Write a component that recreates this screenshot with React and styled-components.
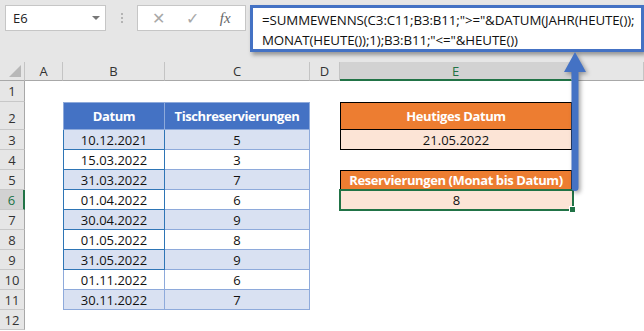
import React from "react";
import styled, { createGlobalStyle, css } from "styled-components";

const GlobalStyle = createGlobalStyle`
  body {
    margin: 0;
    background: #fff;
    font-family: "Open Sans", "Liberation Sans", sans-serif;
  }
`;

const Page = styled.div`
  width: 644px;
  height: 331px;
  overflow: hidden;
  background: #fff;
  position: relative;
`;

const FormulaBar = styled.div`
  height: 62px;
  background: #e6e6e6;
  display: flex;
  align-items: flex-start;
  padding: 5px 0 0 5px;
  box-sizing: border-box;
`;

const NameBox = styled.div`
  width: 101px;
  height: 26px;
  box-sizing: border-box;
  background: #fff;
  border: 1px solid #c6c6c6;
  display: flex;
  align-items: center;
  justify-content: space-between;
  padding: 0 5px 0 7px;
  font-size: 13px;
  color: #222;
`;

const DropArrow = styled.span`
  width: 0;
  height: 0;
  border-left: 4px solid transparent;
  border-right: 4px solid transparent;
  border-top: 4px solid #777;
`;

const Grip = styled.div`
  width: 31px;
  height: 26px;
  display: flex;
  flex-direction: column;
  align-items: center;
  justify-content: center;
  gap: 2px;
  span {
    width: 2px;
    height: 2px;
    background: #b4b4b4;
  }
`;

const FxBox = styled.div`
  width: 109px;
  height: 26px;
  box-sizing: border-box;
  background: #fff;
  border: 1px solid #c6c6c6;
  display: flex;
  align-items: center;
  justify-content: space-around;
  padding: 0 4px;
  color: #a8a8a8;
  font-size: 16px;
`;

const FxLabel = styled.span`
  font-family: "Liberation Serif", serif;
  font-style: italic;
  color: #666;
  font-size: 15px;
`;

const FormulaInput = styled.div`
  margin-left: 4px;
  width: 394px;
  height: 47px;
  box-sizing: border-box;
  background: #fff;
  border: 3px solid #4472c4;
  box-shadow: 2px 3px 4px rgba(0, 0, 0, 0.35);
  padding: 2px 0 0 9px;
  font-family: "Open Sans", "Liberation Sans", sans-serif;
  font-size: 13.3px;
  line-height: 20px;
  color: #111;
  white-space: pre;
  letter-spacing: -0.1px;
`;

const Sheet = styled.div`
  display: grid;
  grid-template-columns: 25px 38px 102px 145px 30px 232px 1fr;
  grid-template-rows: 19px 21px 28px repeat(10, 20px);
  font-size: 13px;
`;

const ColHead = styled.div`
  grid-row: 1;
  grid-column: ${(p) => p.col};
  background: ${(p) => (p.active ? "#d2d2d2" : "#e6e6e6")};
  color: ${(p) => (p.active ? "#217346" : "#333")};
  border-right: 1px solid #c4c4c4;
  border-bottom: ${(p) => (p.active ? "2px solid #217346" : "1px solid #a8a8a8")};
  box-sizing: border-box;
  display: flex;
  align-items: center;
  justify-content: center;
  font-size: 13px;
`;

const Corner = styled.div`
  grid-row: 1;
  grid-column: 1;
  background: #e6e6e6;
  border-right: 1px solid #c4c4c4;
  border-bottom: 1px solid #a8a8a8;
  box-sizing: border-box;
  display: flex;
  align-items: flex-end;
  justify-content: flex-end;
  padding: 0 3px 3px 0;
  &::after {
    content: "";
    width: 0;
    height: 0;
    border-left: 12px solid transparent;
    border-bottom: 12px solid #b8b8b8;
  }
`;

const RowHead = styled.div`
  grid-column: 1;
  grid-row: ${(p) => p.row};
  background: ${(p) => (p.active ? "#d2d2d2" : "#e6e6e6")};
  color: ${(p) => (p.active ? "#217346" : "#333")};
  border-bottom: 1px solid #c8c8c8;
  border-right: ${(p) => (p.active ? "2px solid #217346" : "1px solid #a8a8a8")};
  box-sizing: border-box;
  display: flex;
  align-items: ${(p) => (p.tall ? "flex-end" : "center")};
  padding-bottom: ${(p) => (p.tall ? "2px" : "0")};
  justify-content: center;
  font-size: 13px;
`;

const tones = {
  blueHead: css`
    background: #4472c4;
    color: #fff;
    font-weight: 700;
    letter-spacing: -0.4px;
  `,
  blueBand: css`
    background: #d9e1f2;
  `,
  plain: css`
    background: #fff;
  `,
  orangeHead: css`
    background: #ed7d31;
    color: #fff;
    font-weight: 700;
    letter-spacing: -0.4px;
  `,
  peach: css`
    background: #fce4d6;
  `,
};

const Cell = styled.div`
  grid-column: ${(p) => p.col};
  grid-row: ${(p) => p.row};
  box-sizing: border-box;
  display: flex;
  align-items: center;
  justify-content: center;
  color: #111;
  position: relative;
  margin: ${(p) => p.inset || "0"};
  border-right: 1px solid ${(p) => p.line || "#8eaadb"};
  border-bottom: 1px solid ${(p) => p.line || "#8eaadb"};
  ${(p) => p.left && `border-left: 1px solid ${p.line || "#8eaadb"};`}
  ${(p) => p.top && `border-top: 1px solid ${p.line || "#8eaadb"};`}
  ${(p) => tones[p.tone]}
  ${(p) =>
    p.selected &&
    css`
      border: 2px solid #217346;
      margin: -1px -2px -1px -1px;
      &::after {
        content: "";
        position: absolute;
        right: -4px;
        bottom: -4px;
        width: 5px;
        height: 5px;
        background: #217346;
        border: 1px solid #fff;
      }
    `}
`;

const Arrow = styled.svg`
  position: absolute;
  left: 560px;
  top: 50px;
  filter: drop-shadow(2px 2px 2px rgba(0, 0, 0, 0.35));
`;

const data = [
  ["10.12.2021", 5],
  ["15.03.2022", 3],
  ["31.03.2022", 7],
  ["01.04.2022", 6],
  ["30.04.2022", 9],
  ["01.05.2022", 8],
  ["31.05.2022", 9],
  ["01.11.2022", 6],
  ["30.11.2022", 7],
];

const columns = ["A", "B", "C", "D", "E", ""];

const App = () => {
  return (
    <Page>
      <GlobalStyle />
      <FormulaBar>
        <NameBox>
          E6
          <DropArrow />
        </NameBox>
        <Grip>
          <span />
          <span />
          <span />
        </Grip>
        <FxBox>
          <span>✕</span>
          <span>✓</span>
          <FxLabel>fx</FxLabel>
        </FxBox>
        <FormulaInput>
          {'=SUMMEWENNS(C3:C11;B3:B11;">="&DATUM(JAHR(HEUTE());\nMONAT(HEUTE());1);B3:B11;"<="&HEUTE())'}
        </FormulaInput>
      </FormulaBar>

      <Sheet>
        <Corner />
        {columns.map((c, i) => (
          <ColHead key={i} col={i + 2} active={c === "E"}>
            {c}
          </ColHead>
        ))}
        {Array.from({ length: 12 }, (_, i) => (
          <RowHead key={i} row={i + 2} active={i + 1 === 6} tall={i + 1 === 2}>
            {i + 1}
          </RowHead>
        ))}

        <Cell col={3} row={3} tone="blueHead" left top>
          Datum
        </Cell>
        <Cell col={4} row={3} tone="blueHead" top>
          Tischreservierungen
        </Cell>
        {data.map(([date, count], i) => {
          const row = i + 4;
          const tone = i % 2 === 0 ? "blueBand" : "plain";
          return (
            <React.Fragment key={date + i}>
              <Cell col={3} row={row} tone={tone} left line={i < 7 ? "#2e75b6" : undefined}>
                {date}
              </Cell>
              <Cell col={4} row={row} tone={tone}>
                {count}
              </Cell>
            </React.Fragment>
          );
        })}

        <Cell col={6} row={3} tone="orangeHead" line="#000" left top>
          Heutiges Datum
        </Cell>
        <Cell col={6} row={4} tone="peach" line="#000" left>
          21.05.2022
        </Cell>
        <Cell col={6} row={6} tone="orangeHead" line="#000" left top>
          Reservierungen (Monat bis Datum)
        </Cell>
        <Cell col={6} row={7} tone="peach" selected>
          8
        </Cell>
      </Sheet>

      <Arrow width="30" height="145" viewBox="0 0 30 145">
        <path d="M15 2 L26 22 L18.5 22 L18.5 138 Q18.5 141 15 141 Q11.5 141 11.5 138 L11.5 22 L4 22 Z" fill="#4472c4" />
      </Arrow>
    </Page>
  );
};

export default App;
